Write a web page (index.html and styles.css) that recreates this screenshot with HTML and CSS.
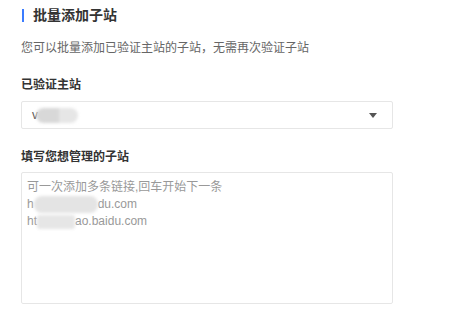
FILE: index.html
```html
<!DOCTYPE html>
<html lang="zh-CN">
<head>
  <meta charset="UTF-8">
  <meta name="viewport" content="width=device-width, initial-scale=1.0">
  <title>批量添加子站</title>
  <link rel="stylesheet" href="styles.css">
</head>
<body>
  <div class="panel">
    <h2 class="title">批量添加子站</h2>
    <p class="desc">您可以批量添加已验证主站的子站，无需再次验证子站</p>

    <div class="field">
      <label class="label">已验证主站</label>
      <div class="select">
        <span class="value">v<span class="blur blur-main"></span></span>
        <span class="arrow"></span>
      </div>
    </div>

    <div class="field">
      <label class="label">填写您想管理的子站</label>
      <div class="textarea">
        <div class="line">可一次添加多条链接,回车开始下一条</div>
        <div class="line">h<span class="blur blur-a"></span>du.com</div>
        <div class="line">ht<span class="blur blur-b"></span>ao.baidu.com</div>
      </div>
    </div>
  </div>
</body>
</html>
```

FILE: styles.css
```css
body {
  margin: 0;
  font-family: "Liberation Sans", "Noto Sans CJK SC", sans-serif;
  background: #fff;
  color: #333;
}

.panel {
  padding: 5px 0 0 21px;
  width: 372px;
}

.title {
  margin: 0 0 0 1px;
  font-size: 14px;
  line-height: 20px;
  font-weight: bold;
  color: #333;
  display: flex;
  align-items: center;
  gap: 9px;
}

.title::before {
  content: "";
  width: 2px;
  height: 13px;
  background: #3b7cff;
}

.desc {
  margin: 15px 0 0;
  font-size: 12px;
  line-height: 17px;
  color: #666;
}

.field {
  margin-top: 20px;
}

.label {
  display: block;
  font-size: 12px;
  line-height: 17px;
  font-weight: bold;
  color: #333;
  margin-bottom: 7px;
}

.select {
  height: 26px;
  border: 1px solid #e6e6e6;
  border-radius: 2px;
  display: flex;
  align-items: center;
  justify-content: space-between;
  padding: 0 15px 0 10px;
}

.value {
  font-size: 12px;
  color: #555;
  display: flex;
  align-items: center;
}

.arrow {
  width: 0;
  height: 0;
  border-left: 4px solid transparent;
  border-right: 4px solid transparent;
  border-top: 5px solid #555;
}

.blur {
  display: inline-block;
  border-radius: 8px;
  filter: blur(1.5px);
  vertical-align: middle;
}

.blur-main {
  width: 42px;
  height: 15px;
  margin-left: -2px;
  background: linear-gradient(90deg, #d8d8d8 55%, #e6e6e6 55%);
}

.blur-a {
  width: 64px;
  height: 17px;
  background: #e4e4e4;
}

.blur-b {
  width: 38px;
  height: 14px;
  border-radius: 3px;
  background: #e6e6e6;
}

.textarea {
  height: 118px;
  border: 1px solid #e6e6e6;
  border-radius: 2px;
  padding: 6px 5px;
  margin-top: -1px;
}

.line {
  font-size: 12px;
  line-height: 17px;
  color: #999;
  white-space: nowrap;
}
```
